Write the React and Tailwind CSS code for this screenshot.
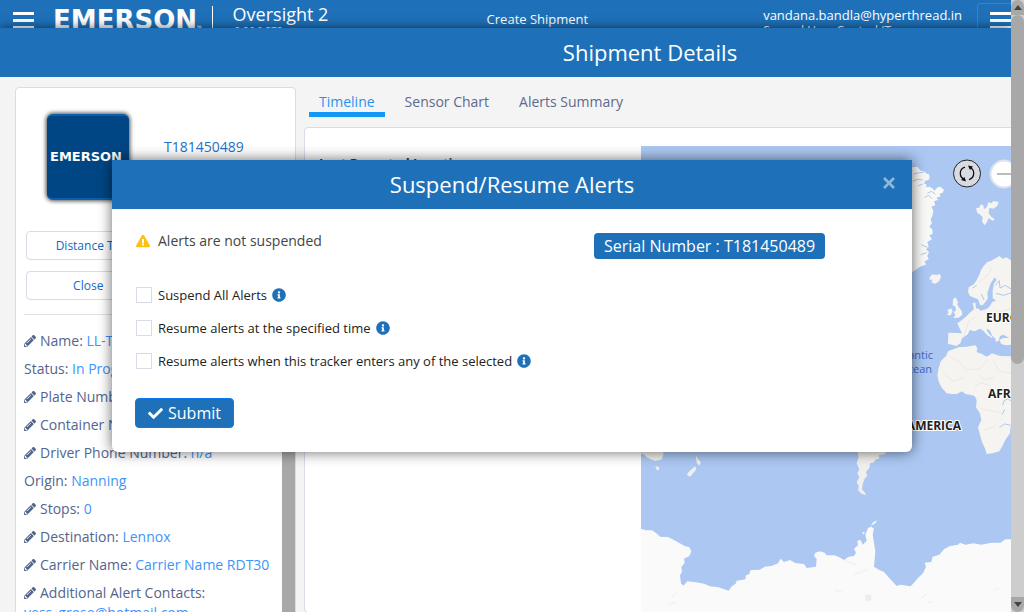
import React from "react";
import {
  FaCheck,
  FaExclamationTriangle,
  FaInfoCircle,
  FaPencilAlt,
} from "react-icons/fa";

const details = [
  { label: "Name:", value: "LL-T181450", editable: true },
  { label: "Status:", value: "In Progress", editable: false },
  { label: "Plate Number:", value: "n/a", editable: true },
  { label: "Container Number:", value: "n/a", editable: true },
  { label: "Driver Phone Number:", value: "n/a", editable: true },
  { label: "Origin:", value: "Nanning", editable: false },
  { label: "Stops:", value: "0", editable: true },
  { label: "Destination:", value: "Lennox", editable: true },
  { label: "Carrier Name:", value: "Carrier Name RDT30", editable: true },
  { label: "Additional Alert Contacts:", value: "yess_grose@hotmail.com", editable: true },
];

const options = [
  { id: "suspend-all", label: "Suspend All Alerts" },
  { id: "resume-time", label: "Resume alerts at the specified time" },
  { id: "resume-place", label: "Resume alerts when this tracker enters any of the selected" },
];

function MenuIcon() {
  return (
    <span className="flex flex-col gap-1">
      <span className="block h-[3px] w-[21px] bg-white" />
      <span className="block h-[3px] w-[21px] bg-white" />
      <span className="block h-[3px] w-[21px] bg-white" />
    </span>
  );
}

function TopBar() {
  return (
    <header className="flex h-7 shrink-0 items-start overflow-hidden bg-[#1e71b9] text-white">
      <button type="button" aria-label="Menu" className="ml-[13px] mt-3 shrink-0">
        <MenuIcon />
      </button>
      <div className="ml-[19px] mt-1.5 flex h-10 shrink-0 items-start border-r border-white pr-[10px]">
        <span className="font-['DejaVu_Sans'] text-[26px] leading-7 font-bold">EMERSON</span>
        <span className="mt-4 text-[6px] leading-3">™</span>
      </div>
      <div className="ml-5 mt-0.5 w-[240px] shrink-0">
        <div className="text-lg leading-6">Oversight 2</div>
        <div className="ml-0.5 text-[10px] leading-[10px]">2.26.0.578</div>
      </div>
      <a href="#create" className="ml-[14px] mt-[9px] shrink-0 text-[13px] leading-5">
        Create Shipment
      </a>
      <div className="ml-auto mt-[5px] shrink-0 text-[13px] leading-5">
        <div>vandana.bandla@hyperthread.in</div>
        <div className="text-xs leading-3">Second User Control IT</div>
      </div>
      <button
        type="button"
        aria-label="Account menu"
        className="ml-[15px] mt-[3px] h-10 w-[34px] shrink-0 overflow-hidden rounded-tl border-l border-t border-[#3c84c4] pl-3 pb-1.5"
      >
        <MenuIcon />
      </button>
    </header>
  );
}

function Sidebar() {
  return (
    <aside className="w-[281px] shrink-0 self-start overflow-hidden rounded border border-[#d8dbe8] bg-white">
      <div className="mr-[14px] pl-2">
        <div className="flex items-center pt-[26px] pl-[23px]">
          <div className="flex h-[86px] w-[82px] items-center justify-start rounded-md border-y-2 border-[#0a5fae] bg-[#004684] pl-[3px] shadow-[0_0_4px_1px_rgba(0,0,0,0.7)]">
            <span className="font-['DejaVu_Sans'] text-[13px] font-bold text-white">EMERSON</span>
          </div>
          <a href="#tracker" className="ml-[35px] mb-5 text-sm text-[#1e71c9]">
            T181450489
          </a>
        </div>
        <div className="ml-0.5 mt-[31px] grid grid-cols-2 gap-x-1.5 gap-y-[11px] text-xs text-[#1268c3]">
          <button type="button" className="h-[29px] rounded border border-[#d8dbe8]">Distance To</button>
          <button type="button" className="h-[29px] rounded border border-[#d8dbe8]">Map</button>
          <button type="button" className="h-[29px] rounded border border-[#d8dbe8]">Close</button>
          <button type="button" className="h-[29px] rounded border border-[#d8dbe8]">Alerts</button>
        </div>
        <hr className="mt-[14px] border-[#dfe0e4]" />
      </div>
      <div className="flex">
        <ul className="flex-1 pb-2 pl-2 pt-3 text-sm text-[#54658c]">
          {details.map((item) => (
            <li key={item.label} className="py-1">
              {item.editable && (
                <FaPencilAlt aria-hidden="true" className="mr-1 inline-block size-3 align-[-1px]" />
              )}
              {item.label} <span className="text-[#3d94fb]">{item.value}</span>
            </li>
          ))}
        </ul>
        <div className="w-[13px] shrink-0 bg-[#a8a8a8]" />
      </div>
    </aside>
  );
}

function WorldMap() {
  return (
    <div className="h-[466px] w-[600px] shrink-0 overflow-hidden bg-[#abc7f2]">
      <svg viewBox="641 146 600 466" className="h-[466px] w-[600px]" role="img" aria-label="World map">
        <g transform="translate(890 140) scale(0.33333)" fill="#f5f4f1">
          <path
            fill="#f8f8f7"
            d="M-60 90 L66 82 L82 80 L92 92 L104 94 L110 102 L116 101 L119 112 L116 120 L106 122 L102 130 L110 134 L108 142 L118 140 L126 144 L134 152 L142 142 L152 140 L162 150 L158 158 L148 162 L152 170 L140 172 L144 180 L132 184 L136 196 L124 200 L130 212 L128 226 L122 238 L126 250 L118 260 L127 268 L128 282 L118 286 L126 298 L112 306 L116 320 L108 328 L117 336 L112 348 L116 358 L104 364 L108 374 L90 380 L80 388 L66 396 L-60 500Z"
          />
          <path d="M120 410 L128 403 L138 405 L150 402 L153 412 L147 424 L136 431 L124 427 L128 419 L118 419Z" />
          <path d="M258 204 L268 203 L272 193 L280 196 L282 208 L290 202 L296 186 L304 190 L310 183 L326 186 L322 198 L310 206 L298 204 L296 220 L304 230 L314 238 L308 243 L296 234 L290 248 L283 256 L276 244 L278 232 L268 222 L262 220Z" />
          <path d="M189 478 L197 472 L204 486 L202 494 L208 503 L216 514 L217 524 L206 533 L190 534 L196 524 L190 516 L198 512 L196 500 L188 496Z" />
          <path d="M172 510 L184 505 L188 514 L182 526 L170 525 L176 518Z" />
          <path d="M175 578 L202 579 L216 580 L210 568 L202 550 L212 543 L226 532 L238 520 L246 512 L252 508 L248 490 L256 487 L258 505 L266 506 L272 512 L290 507 L300 498 L306 486 L318 482 L308 474 L308 452 L312 430 L320 420 L314 412 L302 430 L296 448 L292 460 L294 474 L286 486 L278 496 L270 494 L264 478 L254 474 L240 468 L234 456 L236 442 L252 432 L260 420 L268 404 L274 388 L284 374 L292 366 L304 362 L318 354 L328 348 L338 356 L350 352 L364 362 L420 370 L420 595 L364 590 L364 614 L346 616 L334 612 L328 600 L340 594 L358 594 L340 584 L330 588 L326 602 L318 606 L316 596 L306 586 L300 572 L292 566 L290 572 L300 584 L308 592 L300 604 L306 594 L292 586 L280 572 L270 566 L254 574 L240 570 L232 584 L216 594 L212 608 L200 618 L186 614 L174 612Z" />
          <path d="M183 630 L194 626 L206 622 L230 620 L256 616 L262 624 L260 636 L276 642 L290 650 L300 644 L306 640 L330 648 L420 650 L420 860 L362 858 L360 880 L346 900 L336 920 L328 934 L308 940 L290 942 L286 928 L276 906 L270 884 L264 862 L274 840 L270 820 L258 802 L260 780 L254 768 L240 764 L226 762 L216 754 L200 762 L184 762 L170 760 L154 742 L146 724 L142 706 L146 684 L152 664 L168 648 L174 634Z" />
          <g fill="none" stroke="#aec8ed" strokeWidth="3">
            <path d="M72 102 L88 98 L104 96 M68 124 L82 118 L98 120 M112 160 L124 154 L136 162 M84 138 L98 132 M104 172 L116 166 L126 176 M92 344 L110 338 M94 314 L112 322" />
            <path d="M262 575 L276 590 L288 596 M338 796 L342 782 L354 776 L364 784 M336 824 L344 808 M328 862 L344 852 L362 856 M248 444 L260 436 M274 462 L282 480 M316 436 L328 422 L330 444 L346 436 L364 448 M318 460 L340 466 L364 458" />
          </g>
          <g fill="none" stroke="#e4e2dd" strokeWidth="2">
            <path d="M180 650 L206 664 L230 690 L270 686 L294 658 M160 700 L190 724 L220 714 M266 704 L284 720 L312 712 M310 662 L326 692 L364 700 M252 742 L270 728 L300 736 M270 806 L300 812 L334 818 M284 870 L316 858 M220 596 L236 544 L256 530 M280 516 L310 520 L364 506 M292 540 L324 544 L364 534 M266 424 L292 408 L306 384" />
          </g>
        </g>
        <g transform="translate(630 440) scale(0.33333)" fill="#f0efeb">
          <path d="M33 30 L100 30 L100 46 L94 59 L76 63 L62 58 L50 52 L44 44 L33 40Z" />
          <path d="M76 79 L88 81 L86 91 L80 90Z M197 46 L204 58 L213 66 L208 77 L200 68Z M195 79 L199 88 L188 101 L180 110 L170 104 L178 94Z" />
          <path d="M682 30 L770 30 L766 42 L746 46 L748 56 L738 58 L730 68 L720 70 L718 84 L708 96 L712 108 L704 116 L698 132 L696 148 L706 160 L708 166 L694 161 L684 150 L686 138 L680 126 L688 112 L682 100 L688 88 L680 70 L686 52Z" />
          <path
            fill="#fafafa"
            d="M33 266 L48 271 L66 271 L82 282 L90 290 L114 291 L132 300 L152 311 L164 318 L178 322 L184 334 L178 348 L162 356 L164 368 L154 382 L156 396 L150 406 L153 430 L160 437 L172 424 L198 427 L222 431 L240 439 L266 442 L296 452 L304 440 L318 430 L320 422 L346 418 L348 406 L358 402 L362 390 L390 389 L404 380 L424 378 L444 370 L452 356 L462 366 L480 360 L496 369 L522 372 L530 384 L558 380 L560 356 L552 348 L556 338 L570 334 L584 338 L590 346 L614 346 L628 352 L642 360 L656 350 L672 348 L678 338 L672 326 L684 316 L682 302 L692 300 L698 314 L710 302 L706 284 L714 264 L724 260 L732 266 L728 284 L732 310 L736 334 L732 380 L748 390 L762 396 L778 414 L800 438 L812 434 L842 439 L854 426 L864 414 L880 398 L888 380 L884 368 L904 366 L908 350 L928 344 L942 328 L960 318 L984 314 L990 308 L1006 314 L1030 310 L1054 314 L1084 308 L1112 308 L1126 298 L1142 298 L1300 302 L1900 302 L1900 530 L33 530Z"
          />
          <path fill="#fafafa" d="M728 248 L740 241 L738 248 L722 258Z M696 276 L704 276 L702 284Z" />
          <g fill="none" stroke="#f1f1f2" strokeWidth="4">
            <path d="M116 492 L140 486 M124 472 L142 458 M614 450 L636 456 M672 404 L710 390 M640 362 L680 374 M876 474 L890 462 M890 490 L908 484 M1090 452 L1110 444" />
          </g>
          <rect x="706" y="464" width="18" height="18" fill="#ececec" />
        </g>
        <g fontFamily="Open Sans, sans-serif" stroke="#fff" strokeWidth="2" paintOrder="stroke">
          <g fontSize="12" fontWeight="700" fill="#222">
            <text x="986" y="322">EUROPE</text>
            <text x="988" y="398">AFRICA</text>
            <text x="961" y="430" textAnchor="end">SOUTH AMERICA</text>
          </g>
          <g fontSize="11" fill="#4464c4" stroke="none" textAnchor="end">
            <text x="933" y="359">Atlantic</text>
            <text x="932" y="373">Ocean</text>
          </g>
        </g>
        <circle cx="967" cy="173.500" r="13.500" fill="#d9dbe3" stroke="#222" />
        <g fill="none" stroke="#111" strokeWidth="1.300">
          <path d="M965 179.500 A6.500 6.500 0 0 1 965 167 M969 167 A6.500 6.500 0 0 1 969 179.500" />
        </g>
        <path fill="#111" d="M968 165.500 L973 166.500 L970 170Z M966 181.500 L961 180 L964.500 177Z" />
        <circle cx="1004" cy="174" r="13.500" fill="#fff" stroke="#dce3ee" strokeWidth="2" />
        <path d="M997 174 H1011" stroke="#bbb" strokeWidth="2" />
      </svg>
    </div>
  );
}

function Shipment() {
  return (
    <main className="relative flex min-h-0 flex-1 flex-col bg-[#f4f4f4] shadow-[0_0_10px_rgba(0,0,0,0.6)]">
      <div className="flex h-[49px] w-[1300px] shrink-0 items-center justify-center bg-[#1e71b9] pb-0.5">
        <h1 className="text-[22px] leading-8 text-white">Shipment Details</h1>
      </div>
      <div className="flex min-h-0 flex-1 gap-2 pl-[15px] pt-2.5">
        <Sidebar />
        <section className="shrink-0">
          <nav className="ml-[5px] flex gap-2.5 text-sm text-[#5c6a8c]">
            <a href="#timeline" className="border-b-[5px] border-[#1199f5] px-2.5 pt-[5px] text-[#2793f0]">
              Timeline
            </a>
            <a href="#sensor" className="px-2.5 pt-[5px]">Sensor Chart</a>
            <a href="#alerts" className="px-2.5 pt-[5px]">Alerts Summary</a>
          </nav>
          <div className="mt-2.5 flex rounded border border-[#d8dbe8] bg-white pl-[14px] pt-[18px]">
            <div className="w-[322px] shrink-0 pt-2 text-[13px] font-bold text-[#333f5c]">
              Last Reported Location
            </div>
            <WorldMap />
          </div>
        </section>
      </div>
    </main>
  );
}

function PageScrollbar() {
  return (
    <div className="flex w-[13px] shrink-0 flex-col bg-[#cdcdcd]">
      <div className="flex h-[15px] items-center justify-center rounded-t-lg bg-[#a8a8a8] text-[#444]">
        <svg viewBox="0 0 8 6" className="h-1.5 w-2" fill="currentColor"><path d="M4 0 L8 5 H0Z" /></svg>
      </div>
      <div className="h-[349px] rounded-full bg-[#a8a8a8]" />
      <div className="mt-auto flex h-[15px] items-center justify-center rounded-b-lg bg-[#a8a8a8] text-[#444]">
        <svg viewBox="0 0 8 6" className="h-1.5 w-2" fill="currentColor"><path d="M4 5 L8 0 H0Z" /></svg>
      </div>
    </div>
  );
}

function AlertsDialog() {
  return (
    <div className="absolute inset-0 flex items-start justify-center pt-40">
      <div
        role="dialog"
        aria-labelledby="dialog-title"
        className="w-full max-w-[800px] overflow-hidden rounded-b-md bg-white shadow-[0_0_14px_rgba(0,0,0,0.6)]"
      >
        <div className="relative flex h-[49px] items-center justify-center bg-[#1e71b9] pb-0.5 text-white">
          <h2 id="dialog-title" className="text-[22px] leading-8">Suspend/Resume Alerts</h2>
          <button type="button" aria-label="Close dialog" className="absolute right-[17px] top-[17px] text-[#8fb8dc]">
            <svg viewBox="0 0 12 12" className="size-3" stroke="currentColor" strokeWidth="2.600">
              <path d="M1 1 L11 11 M11 1 L1 11" />
            </svg>
          </button>
        </div>
        <div className="px-6 pb-6 pt-[22px]">
          <div className="flex">
            <div className="flex w-[458px] items-start text-sm text-[#444]">
              <FaExclamationTriangle aria-hidden="true" className="mr-2 mt-[3px] size-[14px] text-[#fcc10f]" />
              Alerts are not suspended
            </div>
            <div className="mt-0.5 rounded bg-[#1e71b9] px-2.5 py-px text-base text-white">
              Serial Number : T181450489
            </div>
          </div>
          <div className="mt-[26px] flex flex-col gap-[13px]">
            {options.map((option) => (
              <div key={option.id} className="flex items-center">
                <input
                  id={option.id}
                  type="checkbox"
                  className="size-4 appearance-none border border-[#d8dbe8] bg-white"
                />
                <label htmlFor={option.id} className="ml-1.5 mr-[5px] text-[13px] leading-5 text-[#222]">
                  {option.label}
                </label>
                <FaInfoCircle aria-hidden="true" className="size-[14px] text-[#1e71b9]" />
              </div>
            ))}
          </div>
          <button
            type="button"
            className="-ml-px mt-[27px] flex h-[30px] items-center gap-[5px] rounded border border-[#0b78ee] bg-[#1e71b9] px-3 text-base text-white"
          >
            <FaCheck aria-hidden="true" className="size-[15px]" />
            Submit
          </button>
        </div>
      </div>
    </div>
  );
}

export default function App() {
  return (
    <div className="relative flex h-screen overflow-hidden font-['Open_Sans',sans-serif]">
      <div className="flex min-w-0 flex-1 flex-col overflow-hidden">
        <TopBar />
        <Shipment />
      </div>
      <PageScrollbar />
      <AlertsDialog />
    </div>
  );
}
